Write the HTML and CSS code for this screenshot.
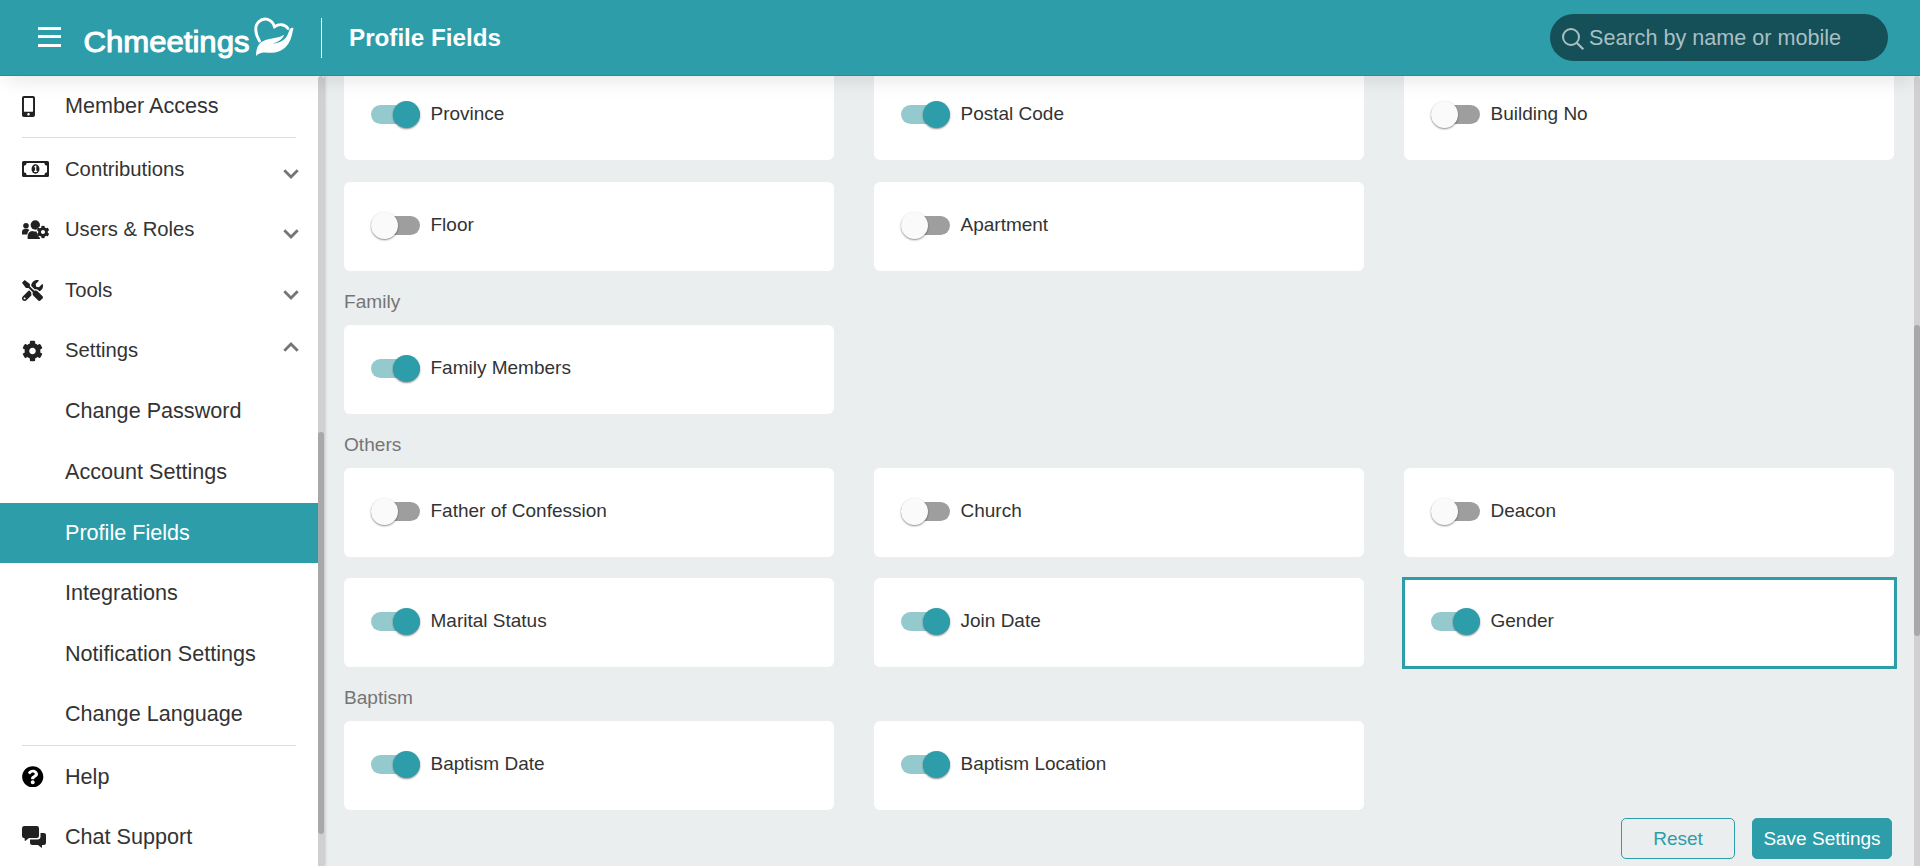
FILE: index.html
```html
<!DOCTYPE html>
<html lang="en">
<head>
<meta charset="utf-8">
<title>Profile Fields</title>
<link rel="stylesheet" href="styles.css">
</head>
<body>
<div class="app">
  <header class="topbar">
    <div class="burger"><span></span><span></span><span></span></div>
    <svg class="logo" width="212" height="50" viewBox="0 0 212 50">
      <text class="logo-text" x="0.500" y="40" textLength="166" lengthAdjust="spacingAndGlyphs">Chmeetings</text>
      <path d="M176.500 29C172 22 171.500 14 175.500 10C181 4.500 189 7 191.500 14.700C196 11.500 202 12 205 16.500" fill="none" stroke="#fff" stroke-width="2.900" stroke-linecap="round"/>
      <path d="M173 44C173 35 176 30.500 182 28.300C188 26.200 195 26.500 201 22.800C200 27 196 29.500 190 31.700C198 31 203.500 27 205.500 20.500C206.500 17 208 15 210.500 16C209 22 208.500 28 204 33.500C198 41 190 41.300 182 40.500C178 40.300 175.500 41.500 173 44Z" fill="#fff"/>
    </svg>
    <div class="divider"></div>
    <h1 class="title">Profile Fields</h1>
    <div class="search">
      <svg width="23" height="23" viewBox="0 0 23 23" fill="none" stroke="#a9bfc3" stroke-width="2"><circle cx="9" cy="9" r="8"/><path d="M14.700 14.800L21.300 21.300" stroke-width="2.300"/></svg>
      <span>Search by name or mobile</span>
    </div>
  </header>

  <div class="body">
    <nav class="sidebar">
      <div class="menu">
        <div class="item"><span class="icon"><svg width="13" height="21" viewBox="0 0 320 512"><path d="M272 0H48C21.500 0 0 21.500 0 48v416c0 26.500 21.500 48 48 48h224c26.500 0 48-21.500 48-48V48c0-26.500-21.500-48-48-48zM160 480c-17.700 0-32-14.300-32-32s14.300-32 32-32 32 14.300 32 32-14.300 32-32 32zm112-108c0 6.600-5.400 12-12 12H60c-6.600 0-12-5.400-12-12V60c0-6.600 5.400-12 12-12h200c6.600 0 12 5.400 12 12v312z"/></svg></span>Member Access</div>
        <hr class="rule">
        <div class="item parent"><span class="icon"><svg width="27" height="16" viewBox="0 0 27 16"><path fill-rule="evenodd" d="M1.500 0H25.500Q27 0 27 1.500V14.500Q27 16 25.500 16H1.500Q0 16 0 14.500V1.500Q0 0 1.500 0ZM4.700 2Q4.500 4.500 2 4.700V11.300Q4.500 11.500 4.700 14H22.300Q22.500 11.500 25 11.300V4.700Q22.500 4.500 22.300 2Z"/><ellipse cx="13.500" cy="8" rx="4" ry="4.700"/><path d="M12.300 6L13.700 5.300V10.300M12 10.400H15.200" fill="none" stroke="#fff" stroke-width="1.200"/></svg></span>Contributions<svg class="chev" width="16" height="10" viewBox="0 0 16 10"><path d="M1.300 1.300L8 8L14.700 1.300"/></svg></div>
        <div class="item parent"><span class="icon"><svg width="27" height="20" viewBox="0 0 27 20"><circle cx="4" cy="5.800" r="2.800"/><circle cx="13.300" cy="5" r="4.700"/><path d="M0 14.500V12Q0 9 3 9H5Q6.500 9 7.400 10Q5.500 11.500 5.200 14.500Z"/><path d="M5.700 19Q5 11 10.500 11Q13.500 12 16.500 11L18 19Z"/><circle cx="21" cy="12" r="6.300" fill="#fff"/><svg x="14.500" y="5.500" width="13" height="13" viewBox="0 0 512 512"><use href="#cog"/></svg></svg></span>Users &amp; Roles<svg class="chev" width="16" height="10" viewBox="0 0 16 10"><path d="M1.300 1.300L8 8L14.700 1.300"/></svg></div>
        <div class="item parent"><span class="icon"><svg width="21" height="21" viewBox="0 0 512 512"><path d="M501.100 395.700L384 278.600c-23.100-23.100-57.600-27.600-85.400-13.900L192 158.100V96L64 0 0 64l96 128h62.100l106.600 106.600c-13.600 27.800-9.200 62.300 13.900 85.400l117.100 117.100c14.600 14.600 38.200 14.600 52.700 0l52.700-52.700c14.500-14.600 14.500-38.200 0-52.700zM331.700 225c28.300 0 54.900 11 74.900 31l19.400 19.400c15.800-6.900 30.800-16.500 43.800-29.500 37.100-37.100 49.700-89.300 37.900-136.700-2.200-9-13.500-12.100-20.100-5.500l-74.400 74.400-67.900-11.300L334 98.900l74.400-74.400c6.600-6.600 3.400-17.900-5.700-20.200-47.400-11.700-99.600.9-136.600 37.900-28.500 28.500-41.900 66.100-41.200 103.600l82.100 82.100c8.100-1.900 16.500-2.900 24.700-2.900zm-103.900 82l-56.700-56.700L18.700 402.800c-25 25-25 65.500 0 90.500s65.500 25 90.500 0l123.600-123.600c-7.600-19.900-9.900-41.600-5-62.700zM64 472c-13.200 0-24-10.800-24-24 0-13.300 10.700-24 24-24s24 10.700 24 24c0 13.200-10.700 24-24 24z"/></svg></span>Tools<svg class="chev" width="16" height="10" viewBox="0 0 16 10"><path d="M1.300 1.300L8 8L14.700 1.300"/></svg></div>
        <div class="item parent"><span class="icon"><svg width="21" height="22" viewBox="0 0 512 512"><path id="cog" d="M487.400 315.700l-42.600-24.600c4.300-23.200 4.300-47 0-70.200l42.600-24.600c4.900-2.800 7.100-8.600 5.500-14-11.100-35.600-30-67.800-54.700-94.600-3.800-4.100-10-5.100-14.800-2.300L380.800 110c-17.900-15.400-38.500-27.300-60.800-35.100V25.800c0-5.600-3.900-10.500-9.400-11.700-36.700-8.200-74.300-7.800-109.200 0-5.500 1.200-9.400 6.100-9.400 11.700V75c-22.200 7.900-42.800 19.800-60.800 35.100L88.700 85.500c-4.900-2.800-11-1.900-14.800 2.300-24.700 26.700-43.600 58.900-54.700 94.600-1.700 5.400.6 11.200 5.500 14L67.300 221c-4.300 23.200-4.300 47 0 70.200l-42.600 24.600c-4.900 2.800-7.100 8.600-5.500 14 11.100 35.600 30 67.800 54.700 94.600 3.800 4.100 10 5.100 14.800 2.300l42.600-24.600c17.900 15.400 38.500 27.300 60.800 35.100v49.200c0 5.600 3.900 10.500 9.400 11.700 36.700 8.200 74.300 7.800 109.200 0 5.500-1.200 9.400-6.100 9.400-11.700v-49.200c22.200-7.900 42.800-19.800 60.800-35.100l42.600 24.600c4.900 2.800 11 1.900 14.800-2.300 24.700-26.700 43.600-58.900 54.700-94.600 1.500-5.500-.7-11.300-5.600-14.100zM256 336c-44.100 0-80-35.900-80-80s35.900-80 80-80 80 35.900 80 80-35.900 80-80 80z"/></svg></span>Settings<svg class="chev open" width="16" height="10" viewBox="0 0 16 10"><path d="M1.300 8.700L8 2L14.700 8.700"/></svg></div>
        <div class="item sub">Change Password</div>
        <div class="item sub">Account Settings</div>
        <div class="item sub active">Profile Fields</div>
        <div class="item sub">Integrations</div>
        <div class="item sub">Notification Settings</div>
        <div class="item sub">Change Language</div>
        <hr class="rule last">
        <div class="item"><span class="icon help"><svg width="21.500" height="21.500" viewBox="4 4 504 504"><path d="M504 256c0 136.997-111.043 248-248 248S8 392.997 8 256C8 119.083 119.043 8 256 8s248 111.083 248 248zM262.655 90c-54.497 0-89.255 22.957-116.549 63.758-3.536 5.286-2.353 12.415 2.715 16.258l34.699 26.310c5.205 3.947 12.621 3.008 16.665-2.122 17.864-22.658 30.113-35.797 57.303-35.797 20.429 0 45.698 13.148 45.698 32.958 0 14.976-12.363 22.667-32.534 33.976C247.128 238.528 216 254.941 216 296v4c0 6.627 5.373 12 12 12h56c6.627 0 12-5.373 12-12v-1.333c0-28.462 83.186-29.647 83.186-106.667 0-58.002-60.165-102-116.531-102zM256 338c-25.365 0-46 20.635-46 46 0 25.364 20.635 46 46 46s46-20.636 46-46c0-25.365-20.635-46-46-46z"/></svg></span>Help</div>
        <div class="item"><span class="icon"><svg width="24" height="22" viewBox="0 0 24 22"><path d="M2.500 0H14.800Q17 0 17 2.200V10Q17 12 14.800 12H7L3.200 14.900Q2.700 15.100 2.700 14.500V12.300H2.200Q0 12 0 10V2.200Q0 0 2.500 0Z"/><path d="M18.500 7H21.800Q24 7 24 9V16.800Q24 19 21.800 19H20V21.500Q20 22 19.500 21.700L16 19H10.200Q8 19 8 16.800V13.500H15.500Q18.500 13.500 18.500 10.500Z"/></svg></span>Chat Support</div>
      </div>
      <div class="track"><div class="thumb side"></div></div>
    </nav>

    <main class="content">
      <div class="fields">
        <section class="grid top">
          <div class="card"><i class="toggle on"></i>Province</div>
          <div class="card"><i class="toggle on"></i>Postal Code</div>
          <div class="card"><i class="toggle"></i>Building No</div>
          <div class="card"><i class="toggle"></i>Floor</div>
          <div class="card"><i class="toggle"></i>Apartment</div>
        </section>
        <h2 class="group">Family</h2>
        <section class="grid">
          <div class="card"><i class="toggle on"></i>Family Members</div>
        </section>
        <h2 class="group">Others</h2>
        <section class="grid">
          <div class="card"><i class="toggle"></i>Father of Confession</div>
          <div class="card"><i class="toggle"></i>Church</div>
          <div class="card"><i class="toggle"></i>Deacon</div>
          <div class="card"><i class="toggle on"></i>Marital Status</div>
          <div class="card"><i class="toggle on"></i>Join Date</div>
          <div class="card selected"><i class="toggle on"></i>Gender</div>
        </section>
        <h2 class="group">Baptism</h2>
        <section class="grid">
          <div class="card"><i class="toggle on"></i>Baptism Date</div>
          <div class="card"><i class="toggle on"></i>Baptism Location</div>
        </section>
      </div>
      <div class="actions"><button class="btn ghost">Reset</button><button class="btn solid">Save Settings</button></div>
      <div class="track"><div class="thumb page"></div></div>
    </main>
  </div>
</div>
</body>
</html>
```
FILE: styles.css
```css
* { box-sizing: border-box; }
body { margin: 0; font-family: "Liberation Sans", Arial, sans-serif; color: #333; }
.app { height: 866px; display: flex; flex-direction: column; overflow: hidden; background: #eaeeef; }

.topbar { position: relative; z-index: 5; flex: none; height: 76px; padding: 0 32px 0 38px; display: flex; align-items: center; background: #2d9daa; border-bottom: 1px solid #2b8b97; box-shadow: 0 14px 20px -8px rgba(0, 0, 0, .07), 0 3px 16px 2px rgba(0, 0, 0, .025); }
.burger { width: 23px; display: flex; flex-direction: column; gap: 5.500px; margin-right: 22px; margin-top: -2px; }
.burger span { height: 3px; background: #fff; }
.logo { margin-bottom: 1px; overflow: visible; }
.logo-text { font: 29px "Liberation Sans", Arial, sans-serif; fill: #fff; stroke: #fff; stroke-width: 1px; stroke-linejoin: round; }
.divider { width: 1px; height: 40px; background: #fff; margin: 0 27px 0 26px; }
.title { margin: 0; font-size: 24.200px; line-height: 28px; font-weight: 700; color: #fff; }
.search { margin-left: auto; width: 338px; height: 47px; border-radius: 24px; background: #154f57; display: flex; align-items: center; padding-left: 12px; gap: 4px; font-size: 21.600px; color: #a9bfc3; }
.search svg { margin-top: 4px; }

.body { flex: 1; min-height: 0; display: flex; }
.sidebar { position: relative; z-index: 2; flex: none; width: 324px; display: flex; background: #fff; box-shadow: 1px 0 3px rgba(0, 0, 0, .2); overflow: hidden; clip-path: inset(0 -5px 0 0); }
.menu { flex: 1; min-width: 0; }
.item { height: 60.600px; padding-left: 22px; display: flex; align-items: center; font-size: 21.600px; white-space: nowrap; }
.item.parent { font-size: 20.250px; padding-bottom: 1px; }
.item.sub { padding-left: 65px; padding-bottom: 1px; }
.item.active { background: #2d9daa; color: #fff; }
.icon { width: 43px; flex: none; display: flex; align-items: center; fill: #212121; }
.icon.help { fill: #000; }
.chev { margin: 9px 19px 0 auto; fill: none; stroke: #757575; stroke-width: 2.800px; }
.chev.open { margin-top: -8px; }
.rule { margin: 0 22px 1.700px; height: 1px; border: 0; background: #dcdcdc; }
.rule.last { margin-bottom: 0; }
.track { width: 6px; flex: none; background: #d0d0d0; border-radius: 3px 3px 0 0; }
.thumb { border-radius: 3px; background: #a8a8a8; }
.thumb.side { margin-top: 356px; height: 402px; }
.thumb.page { margin-top: 249px; height: 311px; }

.content { position: relative; flex: 1; min-width: 0; display: flex; overflow: hidden; }
.fields { flex: 1; padding: 0 20px; }
.grid { display: grid; grid-template-columns: repeat(3, 490px); column-gap: 40px; row-gap: 21px; }
.grid.top { margin-top: -5px; row-gap: 22px; }
.card { position: relative; height: 89px; border-radius: 6px; background: #fff; display: flex; align-items: center; padding: 0 27px 4px; font-size: 19px; }
.selected::after { content: ""; position: absolute; inset: -1px -3px -2px -2px; border: 3px solid #2d9daa; }
.group { margin: 0; height: 54px; padding: 20px 0 0; font-size: 19.100px; line-height: 22px; font-weight: 400; color: #757575; }
.toggle { width: 49px; height: 19px; margin: 2px 10.500px 0 0; border-radius: 10px; background: #9e9e9e; display: flex; align-items: center; }
.toggle::before { content: ""; flex: none; width: 27px; height: 27px; border-radius: 50%; background: #fafafa; box-shadow: 0 1px 2px rgba(0, 0, 0, .45); }
.toggle.on { background: #94c9ce; justify-content: flex-end; }
.toggle.on::before { background: #2d9daa; }

.actions { position: absolute; right: 28px; bottom: 7px; display: flex; gap: 17px; }
.btn { height: 41px; padding: 0; border: 1px solid #2d9daa; border-radius: 5px; font: 19px "Liberation Sans", Arial, sans-serif; }
.ghost { width: 114px; background: transparent; color: #2d9daa; }
.solid { width: 140px; background: #2d9daa; color: #fff; }
```
